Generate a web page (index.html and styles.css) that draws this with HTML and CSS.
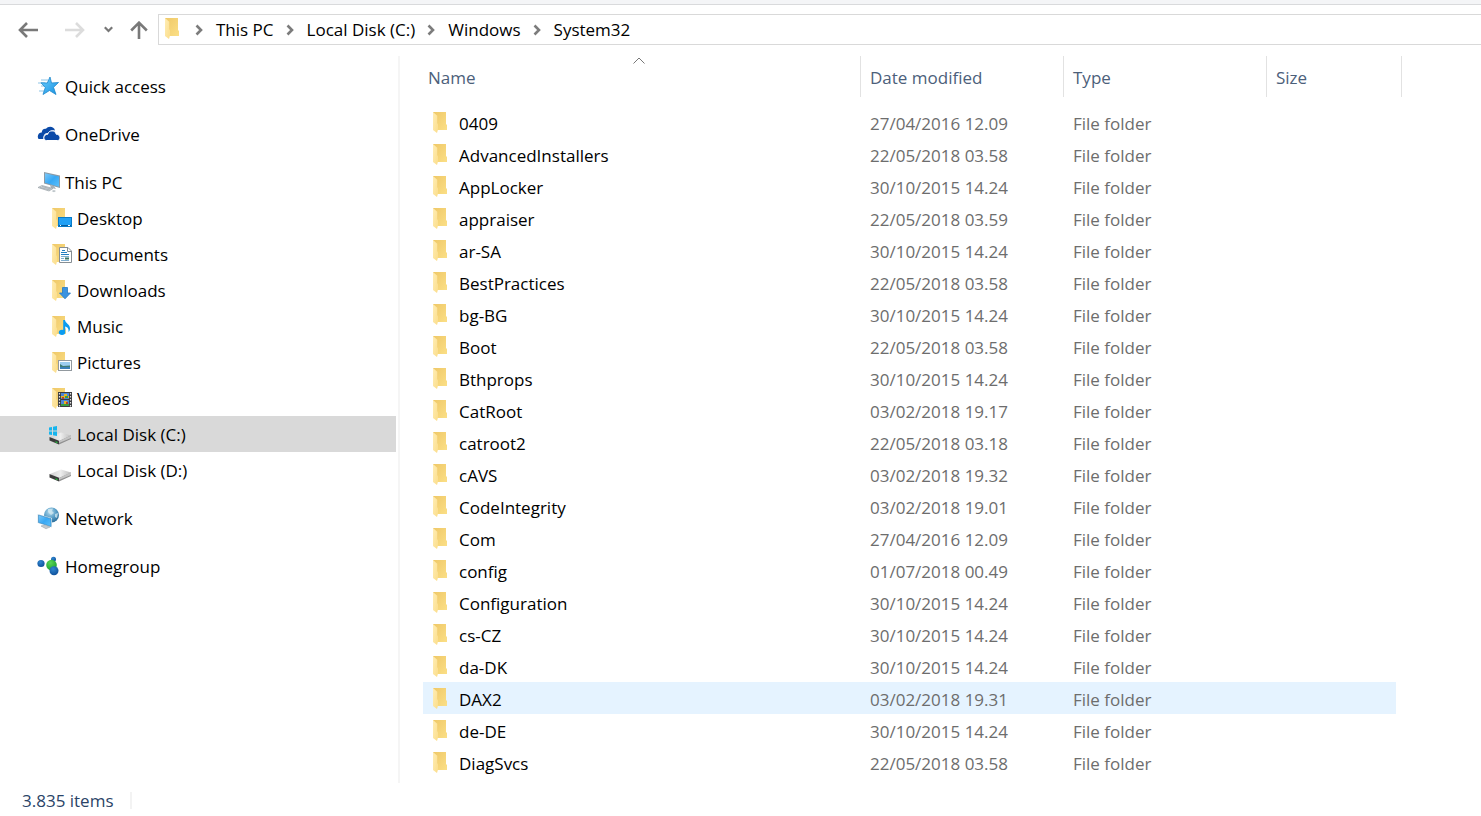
FILE: index.html
```html
<!DOCTYPE html>
<html lang="en">
<head>
<meta charset="utf-8">
<title>System32</title>
<link rel="stylesheet" href="styles.css">
</head>
<body>
<svg class="sprite" aria-hidden="true">
  <defs>
    <linearGradient id="gBack" x1="0" y1="0" x2="1" y2="1"><stop offset="0" stop-color="#efc868"/><stop offset="1" stop-color="#fbdf86"/></linearGradient>
    <linearGradient id="gFront" x1="0" y1="0" x2="1" y2="1"><stop offset="0" stop-color="#ffedb5"/><stop offset="1" stop-color="#fbdd8a"/></linearGradient>
    <linearGradient id="gScreen" x1="0" y1="0" x2="1" y2="1"><stop offset="0" stop-color="#7cc8f8"/><stop offset=".5" stop-color="#38a8f4"/><stop offset="1" stop-color="#5cc0fb"/></linearGradient>
    <linearGradient id="gStar" x1="0" y1="0" x2="1" y2="1"><stop offset="0" stop-color="#6fd0ff"/><stop offset="1" stop-color="#1590e0"/></linearGradient>
    <radialGradient id="gGlobe" cx=".4" cy=".3" r=".8"><stop offset="0" stop-color="#b6dcee"/><stop offset=".5" stop-color="#5a9fc8"/><stop offset="1" stop-color="#20628f"/></radialGradient>
    <radialGradient id="gBlue" cx=".4" cy=".3" r=".8"><stop offset="0" stop-color="#2f86d0"/><stop offset="1" stop-color="#0b4a94"/></radialGradient>
    <radialGradient id="gGreen" cx=".4" cy=".3" r=".8"><stop offset="0" stop-color="#5ad657"/><stop offset="1" stop-color="#159b2c"/></radialGradient>
    <linearGradient id="gDisk" x1="0" y1="0" x2="1" y2="0"><stop offset="0" stop-color="#cfcfcf"/><stop offset=".5" stop-color="#ededed"/><stop offset="1" stop-color="#bdbdbd"/></linearGradient>
  </defs>
  <symbol id="folder" viewBox="0 0 14 21">
    <path fill="url(#gBack)" d="M0 0H13V12L14 13V18H0Z"/>
    <path fill="url(#gFront)" d="M0 0L4.500 4V11L5 13V17.500L4 21L0 18Z"/>
    <path fill="#f1cd74" d="M4.500 4V11L5 12V4Z"/>
  </symbol>
  <symbol id="sep" viewBox="0 0 8 12"><path d="M1.500 1.500L6 6L1.500 10.500" fill="none" stroke="#7c7c7c" stroke-width="2.600"/></symbol>
  <symbol id="disk" viewBox="0 0 23 13">
    <path fill="url(#gDisk)" d="M1 5L12 .5L22 3.500L10 9.500Z"/>
    <path fill="#8f8f8f" d="M10 9L22 3.500V7L10 12.500Z"/>
    <path fill="#c4c4c4" d="M10 9L22 3.500V6L10 11Z"/>
    <path fill="#3c3c3c" d="M.5 5L10 8.800V12.500L.5 8.500Z"/>
    <path fill="#25c23e" d="M6.500 9.200L8.500 10V11.200L6.500 10.400Z"/>
  </symbol>
</svg>

<div class="window">
  <div class="ribbon-edge"></div>
  <header class="toolbar">
    <nav class="history" aria-label="History">
      <button class="tool" aria-label="Back"><svg width="20" height="16" viewBox="0 0 20 16"><path d="M20 8H2M9 1L2 8L9 15" fill="none" stroke="#797979" stroke-width="2.600"/></svg></button>
      <button class="tool forward" aria-label="Forward" disabled><svg width="20" height="16" viewBox="0 0 20 16"><path d="M0 8H18M11 1L18 8L11 15" fill="none" stroke="#dcdcdc" stroke-width="2.600"/></svg></button>
      <button class="tool recent" aria-label="Recent locations"><svg width="9" height="7" viewBox="0 0 9 7"><path d="M.8 1.200L4.500 5L8.200 1.200" fill="none" stroke="#777" stroke-width="2.200"/></svg></button>
      <button class="tool up" aria-label="Up"><svg width="18" height="18" viewBox="0 0 18 18"><path d="M9 18V2M1.200 9.500L9 1.700L16.800 9.500" fill="none" stroke="#797979" stroke-width="2.600"/></svg></button>
    </nav>
    <nav class="address" aria-label="Address">
      <svg class="address-icon" width="14" height="21"><use href="#folder"/></svg>
      <svg class="sep" width="8" height="12"><use href="#sep"/></svg><a href="#">This PC</a>
      <svg class="sep" width="8" height="12"><use href="#sep"/></svg><a href="#">Local Disk (C:)</a>
      <svg class="sep" width="8" height="12"><use href="#sep"/></svg><a href="#">Windows</a>
      <svg class="sep" width="8" height="12"><use href="#sep"/></svg><a href="#">System32</a>
    </nav>
  </header>

  <div class="body">
    <nav class="sidebar" aria-label="Folders">
      <a class="item root" href="#"><svg width="24" height="24" viewBox="0 0 24 24"><path d="M4 6H11M1 9H8M4 12H9M2 17H7" stroke="#8fc5e8" stroke-width="1.200"/><path fill="url(#gStar)" stroke="#1d86cc" stroke-width=".8" d="M13 3L14.500 9L21.500 8.500L16.500 13.300L19 20.500L12.500 16.500L6 20.500L8.300 13.500L4 8.800L10.300 9Z"/></svg>Quick access</a>
      <a class="item root" href="#"><svg width="24" height="24" viewBox="0 0 24 24"><path fill="#0b4aa8" d="M1.500 17C-.5 13.500 2 10.500 4.700 10.500C5 7 7.500 6.300 9 6.800C11 3.800 17 4 18 8.500C14.500 7.700 12.500 9 11.500 11C8 10.500 6 13 6.500 17Z"/><path fill="#0b4aa8" stroke="#fff" d="M9.500 18.500C5.700 18.500 6 12.500 10.700 12.300C11.700 7.500 18.500 8 19.200 12.200C24 12.500 24 18.500 20.500 18.500Z"/></svg>OneDrive</a>
      <a class="item root" href="#"><svg width="24" height="24" viewBox="0 0 24 24"><path fill="#8b9aa5" d="M7 2L23 5.500V18L7 13.500Z"/><path fill="url(#gScreen)" d="M8 3.300L22 6.500V16.700L8 12.700Z"/><path fill="#a9b1b7" d="M13 15L17 16L19 19L14 18Z"/><path fill="#d5dadd" stroke="#98a0a6" stroke-width=".7" d="M1 17.500L5 15.500L16 18.500L12 21Z"/><path d="M3 17.500L13 20M5 16.500L14 19" stroke="#8f999f" stroke-width=".6"/><path fill="#bcc4c8" d="M14.500 21L17 20L19 21L17 22.300Z"/></svg>This PC</a>
      <a class="item child" href="#"><svg width="24" height="24" viewBox="0 0 24 24"><use href="#folder" x="3" y="2" width="14" height="21"/><rect x="9.500" y="11.500" width="13" height="9" fill="#20a0f5" stroke="#087bc8"/><path d="M10 19.500H22" stroke="#075e9e"/><path d="M11 19.500H12M19 19.500H21" stroke="#fff"/></svg>Desktop</a>
      <a class="item child" href="#"><svg width="24" height="24" viewBox="0 0 24 24"><use href="#folder" x="3" y="2" width="14" height="21"/><path fill="#fff" stroke="#868e94" d="M10.500 5.500H19L22.500 9V20.500H10.500Z"/><path fill="none" stroke="#868e94" d="M18.500 5.500V9.500H22.500"/><path d="M12 14.500H20M12 16.500H15M12 18.500H20" stroke="#7faed0"/><path d="M12 10.500H18M13 8.500H16M12 12.500H20" stroke="#267fc0"/><path d="M16 16.500H20" stroke="#3e7563" stroke-width="2"/></svg>Documents</a>
      <a class="item child" href="#"><svg width="24" height="24" viewBox="0 0 24 24"><use href="#folder" x="3" y="2" width="14" height="21"/><path fill="#3b93e0" stroke="#2478c4" stroke-width=".8" d="M13.500 9.500H18.500V15H21.500L16 20.800L10.500 15H13.500Z"/></svg>Downloads</a>
      <a class="item child" href="#"><svg width="24" height="24" viewBox="0 0 24 24"><use href="#folder" x="3" y="2" width="14" height="21"/><ellipse cx="13" cy="18.300" rx="3.200" ry="2.600" fill="#0a9cf0"/><path fill="#0a9cf0" d="M14.200 6H16C16.500 9.500 21 10 21 14.500C21 16 20.500 17 19.500 18C20 14.500 18.500 13.200 16.200 12.500V18.500H14.200Z"/></svg>Music</a>
      <a class="item child" href="#"><svg width="24" height="24" viewBox="0 0 24 24"><use href="#folder" x="3" y="2" width="14" height="21"/><rect x="9.500" y="10.500" width="13" height="10" fill="#fff" stroke="#92999f"/><rect x="11" y="12" width="10" height="7" fill="#9ccdf0"/><path fill="#3f7c75" d="M11 14L14 16L21 15.500V17H11Z"/><path fill="#3b80b8" d="M11 17H21V19H11Z"/></svg>Pictures</a>
      <a class="item child" href="#"><svg width="24" height="24" viewBox="0 0 24 24"><use href="#folder" x="3" y="2" width="14" height="21"/><rect x="9" y="6" width="14" height="15" fill="#3c3d40"/><path d="M10.500 7V21M21.500 7V21" stroke="#e4e4e4" stroke-width="1.200" stroke-dasharray="1.500 1.500"/><rect x="12" y="7" width="8" height="6" fill="#4c86d8"/><rect x="12" y="14" width="8" height="6" fill="#4c86d8"/><path fill="#e7b526" d="M15 8H18V10H20V12H12V10H15ZM15 15H18V18H15Z"/><path fill="#3a9c43" d="M16 10H19V12H16ZM12 18H20V20H12Z"/><path fill="#b5442e" d="M13 11H15V13H13ZM17 16H19V18H17Z"/></svg>Videos</a>
      <a class="item child selected" href="#" aria-current="true"><svg width="24" height="24" viewBox="0 0 24 24"><use href="#disk" x="0" y="10" width="23" height="13"/><path fill="#16b5ee" d="M0 5.500L3 5V8.500H0ZM4 4.800L8 4V8.500H4ZM0 9.500H3V13L0 12.500ZM4 9.500H8V14L4 13.200Z"/></svg>Local Disk (C:)</a>
      <a class="item child" href="#"><svg width="24" height="24" viewBox="0 0 24 24"><use href="#disk" x="0" y="11" width="23" height="13"/></svg>Local Disk (D:)</a>
      <a class="item root" href="#"><svg width="24" height="24" viewBox="0 0 24 24"><circle cx="14.500" cy="9" r="7.500" fill="url(#gGlobe)"/><path fill="#d5ebf3" opacity=".75" d="M11 3L16 2.500L15 5L17 7L14 9L11 6ZM18 8L21 7L20 12L18 11Z"/><path fill="#dbe7ee" d="M.5 8L15 12V21.500L.5 17Z"/><path fill="url(#gScreen)" stroke="#3384bd" stroke-width=".6" d="M1.500 9L14 12.700V20.500L1.500 16.500Z"/><path fill="#c3cacf" stroke="#939ca3" stroke-width=".5" d="M4 20L8 19L13 21L9 22.800Z"/></svg>Network</a>
      <a class="item root" href="#"><svg width="24" height="24" viewBox="0 0 24 24"><circle cx="4" cy="9.500" r="3.600" fill="url(#gBlue)"/><circle cx="16.500" cy="5.300" r="2.500" fill="url(#gBlue)"/><circle cx="14.500" cy="11" r="5.300" fill="url(#gGreen)"/><circle cx="17" cy="16.800" r="4.500" fill="url(#gBlue)"/></svg>Homegroup</a>
    </nav>

    <main class="files">
      <table>
        <colgroup><col class="c-name"><col class="c-date"><col class="c-type"><col class="c-size"></colgroup>
        <thead>
          <tr>
            <th scope="col" aria-sort="ascending"><button>Name<svg class="sort" width="12" height="7" viewBox="0 0 12 7"><path d="M.5 6.500L6 1L11.500 6.500" fill="none" stroke="#777"/></svg></button></th>
            <th scope="col"><button>Date modified</button></th>
            <th scope="col"><button>Type</button></th>
            <th scope="col"><button>Size</button></th>
          </tr>
        </thead>
        <tbody>
          <tr><td><svg width="14" height="21"><use href="#folder"/></svg>0409</td><td>27/04/2016 12.09</td><td>File folder</td><td></td></tr>
          <tr><td><svg width="14" height="21"><use href="#folder"/></svg>AdvancedInstallers</td><td>22/05/2018 03.58</td><td>File folder</td><td></td></tr>
          <tr><td><svg width="14" height="21"><use href="#folder"/></svg>AppLocker</td><td>30/10/2015 14.24</td><td>File folder</td><td></td></tr>
          <tr><td><svg width="14" height="21"><use href="#folder"/></svg>appraiser</td><td>22/05/2018 03.59</td><td>File folder</td><td></td></tr>
          <tr><td><svg width="14" height="21"><use href="#folder"/></svg>ar-SA</td><td>30/10/2015 14.24</td><td>File folder</td><td></td></tr>
          <tr><td><svg width="14" height="21"><use href="#folder"/></svg>BestPractices</td><td>22/05/2018 03.58</td><td>File folder</td><td></td></tr>
          <tr><td><svg width="14" height="21"><use href="#folder"/></svg>bg-BG</td><td>30/10/2015 14.24</td><td>File folder</td><td></td></tr>
          <tr><td><svg width="14" height="21"><use href="#folder"/></svg>Boot</td><td>22/05/2018 03.58</td><td>File folder</td><td></td></tr>
          <tr><td><svg width="14" height="21"><use href="#folder"/></svg>Bthprops</td><td>30/10/2015 14.24</td><td>File folder</td><td></td></tr>
          <tr><td><svg width="14" height="21"><use href="#folder"/></svg>CatRoot</td><td>03/02/2018 19.17</td><td>File folder</td><td></td></tr>
          <tr><td><svg width="14" height="21"><use href="#folder"/></svg>catroot2</td><td>22/05/2018 03.18</td><td>File folder</td><td></td></tr>
          <tr><td><svg width="14" height="21"><use href="#folder"/></svg>cAVS</td><td>03/02/2018 19.32</td><td>File folder</td><td></td></tr>
          <tr><td><svg width="14" height="21"><use href="#folder"/></svg>CodeIntegrity</td><td>03/02/2018 19.01</td><td>File folder</td><td></td></tr>
          <tr><td><svg width="14" height="21"><use href="#folder"/></svg>Com</td><td>27/04/2016 12.09</td><td>File folder</td><td></td></tr>
          <tr><td><svg width="14" height="21"><use href="#folder"/></svg>config</td><td>01/07/2018 00.49</td><td>File folder</td><td></td></tr>
          <tr><td><svg width="14" height="21"><use href="#folder"/></svg>Configuration</td><td>30/10/2015 14.24</td><td>File folder</td><td></td></tr>
          <tr><td><svg width="14" height="21"><use href="#folder"/></svg>cs-CZ</td><td>30/10/2015 14.24</td><td>File folder</td><td></td></tr>
          <tr><td><svg width="14" height="21"><use href="#folder"/></svg>da-DK</td><td>30/10/2015 14.24</td><td>File folder</td><td></td></tr>
          <tr class="hovered"><td><svg width="14" height="21"><use href="#folder"/></svg>DAX2</td><td>03/02/2018 19.31</td><td>File folder</td><td></td></tr>
          <tr><td><svg width="14" height="21"><use href="#folder"/></svg>de-DE</td><td>30/10/2015 14.24</td><td>File folder</td><td></td></tr>
          <tr><td><svg width="14" height="21"><use href="#folder"/></svg>DiagSvcs</td><td>22/05/2018 03.58</td><td>File folder</td><td></td></tr>
        </tbody>
      </table>
    </main>
  </div>
  <footer class="status"><span>3.835 items</span></footer>
</div>
</body>
</html>
```
FILE: styles.css
```css
* { box-sizing: border-box; }
body {
  margin: 0;
  background: #fff;
  color: #000;
  font: 17px/24px "Open Sans", "Noto Sans", sans-serif;
}
a { color: inherit; text-decoration: none; }
button { font: inherit; color: inherit; background: none; border: 0; padding: 0; }
svg { display: block; flex: none; }
.sprite { position: absolute; width: 0; height: 0; }

.window { display: flex; flex-direction: column; min-height: 100vh; }
.ribbon-edge { height: 5px; background: #f4f5f7; border-bottom: 1px solid #d9dadc; }

.toolbar { display: flex; align-items: center; padding-top: 9px; }
.history { display: flex; align-items: center; width: 158px; padding-left: 18px; }
.forward { margin-left: 27px; }
.recent { margin-left: 19px; }
.up { margin-left: 17px; }
.address {
  display: flex;
  flex: 1;
  align-items: center;
  height: 31px;
  padding-left: 6px;
  border: 1px solid #d9d9d9;
  border-right: 0;
  white-space: nowrap;
}
.address-icon { margin-bottom: 2px; }
.sep { margin: 0 13px 0 12px; }
.address-icon + .sep { margin-left: 16px; }

.body { display: flex; flex: 1; padding-top: 11px; }
.sidebar { width: 400px; flex: none; padding-top: 12px; border-right: 2px solid #f5f5f5; }
.item { display: flex; align-items: center; height: 36px; margin-right: 2px; padding-top: 2px; }
.item svg { margin: 0 4px 2px 0; }
.root { padding-left: 37px; }
.child { padding-left: 49px; }
.root + .root, .child + .root { margin-top: 12px; }
.selected { background: #d9d9d9; }

.files { flex: 1; min-width: 0; padding-left: 23px; }
table { width: 979px; table-layout: fixed; border-collapse: collapse; }
.c-name { width: 438px; }
.c-date, .c-type { width: 203px; }
th { padding: 0 0 9px; font-weight: 400; color: #4c607a; }
th button {
  position: relative;
  display: block;
  width: 100%;
  height: 41px;
  padding: 2px 9px 0;
  border-right: 1px solid #e2e2e2;
  text-align: left;
}
th:first-child button { padding-left: 5px; }
.sort { position: absolute; top: 1px; left: 48%; }
td { height: 32px; padding: 4px 9px 0; color: #6d6d6d; }
td:first-child { padding-left: 36px; color: #000; }
td svg { float: left; margin: 0 12px 0 -26px; }
.hovered td { background: #e5f3ff; }
.hovered td:last-child { background: linear-gradient(#e5f3ff, #e5f3ff) no-repeat 0 0 / calc(100% - 6px) 100%; }

.status { display: flex; align-items: center; height: 33px; padding: 2px 22px 0; color: #2b4467; }
.status span { padding-right: 16px; border-right: 2px solid #f3f3f3; line-height: 17px; }
```
